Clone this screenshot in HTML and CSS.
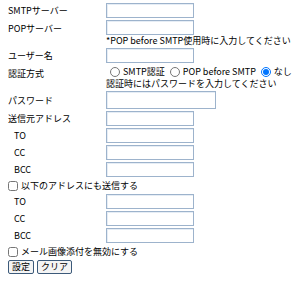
FILE: index.html
```html
<!DOCTYPE html>
<html lang="ja">
<head>
    <meta charset="UTF-8">
    <title>メール設定</title>
    <link rel="stylesheet" href="styles.css">
</head>
<body>
    <form class="mail-form">
        <table class="settings">
            <tr>
                <td class="label">SMTPサーバー</td>
                <td><input type="text" class="field"></td>
            </tr>
            <tr>
                <td class="label top">POPサーバー</td>
                <td>
                    <input type="text" class="field">
                    <div class="note">*POP before SMTP使用時に入力してください</div>
                </td>
            </tr>
            <tr>
                <td class="label">ユーザー名</td>
                <td><input type="text" class="field"></td>
            </tr>
            <tr>
                <td class="label top">認証方式</td>
                <td>
                    <div class="radios">
                        <label><input type="radio" name="auth"> SMTP認証</label>
                        <label><input type="radio" name="auth"> POP before SMTP</label>
                        <label><input type="radio" name="auth" checked> なし</label>
                    </div>
                    <div class="note">認証時にはパスワードを入力してください</div>
                </td>
            </tr>
            <tr>
                <td class="label">パスワード</td>
                <td><input type="password" class="field wide"></td>
            </tr>
            <tr>
                <td class="label">送信元アドレス</td>
                <td><input type="text" class="field"></td>
            </tr>
            <tr>
                <td class="label sub">TO</td>
                <td><input type="text" class="field"></td>
            </tr>
            <tr>
                <td class="label sub">CC</td>
                <td><input type="text" class="field"></td>
            </tr>
            <tr>
                <td class="label sub">BCC</td>
                <td><input type="text" class="field"></td>
            </tr>
            <tr>
                <td colspan="2" class="check"><label><input type="checkbox"> 以下のアドレスにも送信する</label></td>
            </tr>
            <tr>
                <td class="label sub">TO</td>
                <td><input type="text" class="field"></td>
            </tr>
            <tr>
                <td class="label sub">CC</td>
                <td><input type="text" class="field"></td>
            </tr>
            <tr>
                <td class="label sub">BCC</td>
                <td><input type="text" class="field"></td>
            </tr>
            <tr>
                <td colspan="2" class="check"><label><input type="checkbox"> メール画像添付を無効にする</label></td>
            </tr>
        </table>
        <div class="buttons">
            <button type="submit">設定</button>
            <button type="reset">クリア</button>
        </div>
    </form>
</body>
</html>
```

FILE: styles.css
```css
* {
    box-sizing: border-box;
}
body {
    margin: 0;
    padding: 3px 0 0 8px;
    background: #ffffff;
    color: #000000;
    font-family: "Noto Sans CJK JP", "Noto Sans", sans-serif;
    font-size: 9px;
}
.settings {
    border-collapse: collapse;
}
.settings td {
    padding: 0 0 2px 0;
    vertical-align: middle;
}
.label {
    width: 98px;
    white-space: nowrap;
}
.label.top {
    vertical-align: top;
    padding-top: 2px;
}
.label.sub {
    padding-left: 6px;
}
.field {
    display: block;
    width: 88px;
    height: 15px;
    margin: 0;
    border: 1px solid #9db3cc;
    box-shadow: inset 1px 1px 0 #e6edf5;
    background: #ffffff;
}
.field.wide {
    width: 110px;
    height: 18px;
}
.note {
    line-height: 11px;
    white-space: nowrap;
}
.radios {
    display: flex;
    gap: 5px;
    padding-left: 4px;
    white-space: nowrap;
}
.radios label,
.check label {
    display: flex;
    align-items: center;
    gap: 3px;
}
input[type="radio"],
input[type="checkbox"] {
    width: 10px;
    height: 10px;
    margin: 0;
}
.check {
    padding: 1px 0 3px 2px;
}
.buttons {
    display: flex;
    gap: 3px;
}
button {
    font-family: inherit;
    font-size: 9px;
    padding: 0 3px;
    height: 14px;
    line-height: 12px;
    border: 1px solid #3c5a7a;
    border-radius: 2px;
    background: #f4f4f4;
}
```
